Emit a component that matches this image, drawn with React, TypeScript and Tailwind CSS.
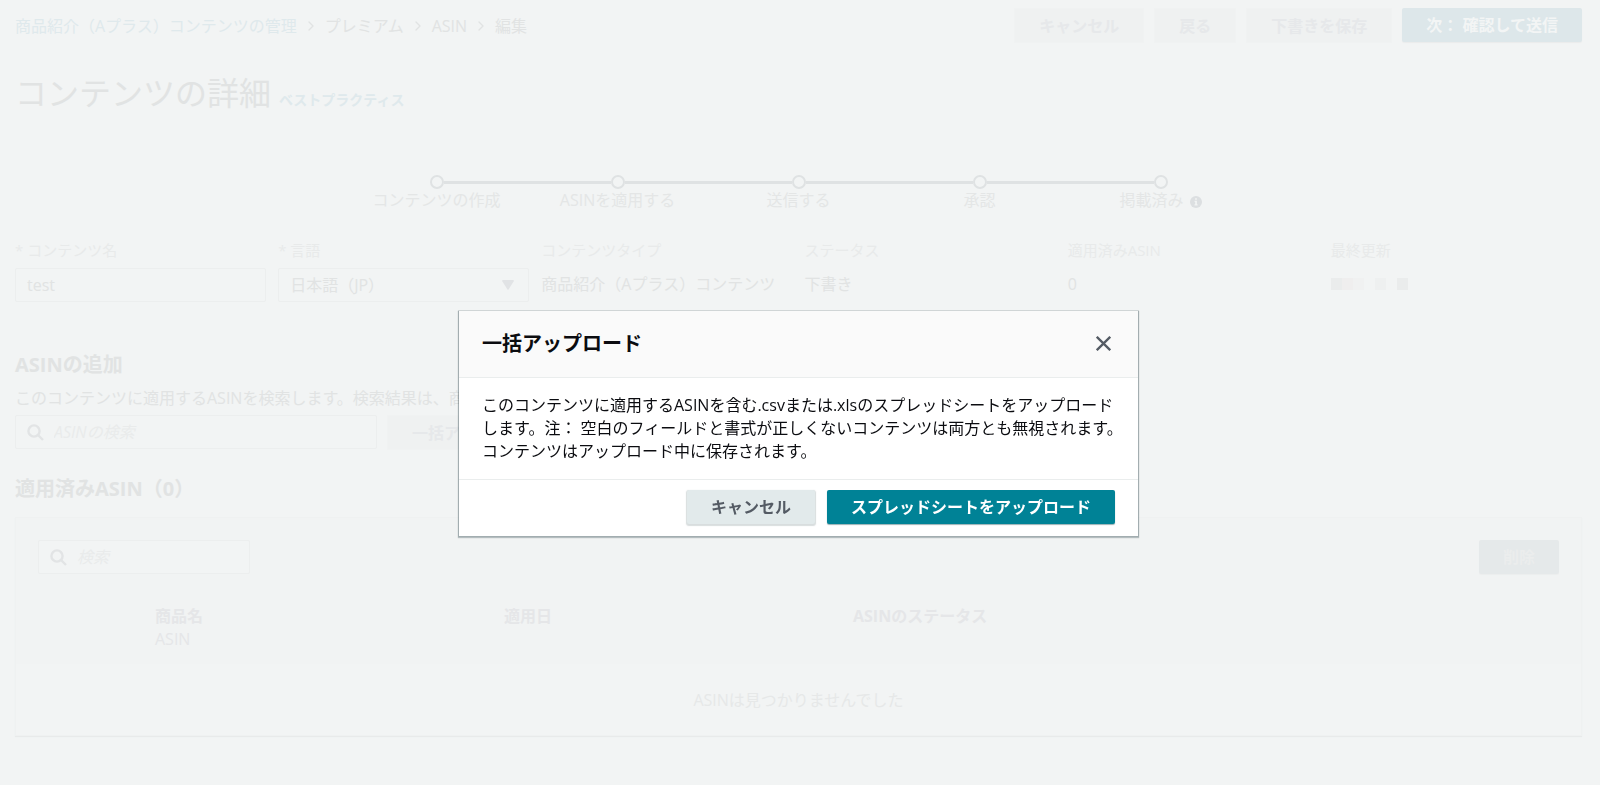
import React from 'react';
import { ChevronRight } from 'lucide-react';

const steps = ['コンテンツの作成', 'ASINを適用する', '送信する', '承認', '掲載済み'];

const redactedBlocks = ['bg-[#eaecec]', 'bg-[#efeeee]', 'bg-[#f0f1f1]', 'bg-transparent', 'bg-[#eef0f0]', 'bg-transparent', 'bg-[#eaecec]'];

function SearchIcon() {
  return (
    <svg width="17" height="17" viewBox="0 0 17 17" fill="none" stroke="#e2e4e5" strokeWidth="2.4" className="shrink-0">
      <circle cx="7" cy="7" r="5.6" />
      <path d="M11 11l5 5" />
    </svg>
  );
}

function InfoIcon() {
  return (
    <svg width="12" height="12" viewBox="0 0 12 12" className="mt-1">
      <circle cx="6" cy="6" r="6" fill="#dcdfe1" />
      <path d="M5.1 2.2h1.8v1.6H5.1zM4.6 4.8h2.3v3.5h.7v1.1H4.5V8.3h.7V5.9h-.6z" fill="#f2f4f4" />
    </svg>
  );
}

function GhostButton({ children }: { children: React.ReactNode }) {
  return (
    <button
      type="button"
      className="h-[35px] shrink-0 whitespace-nowrap rounded-xs border border-[#f0f2f2] bg-[#eff1f1] px-6 font-bold text-[#e6e8ea]"
    >
      {children}
    </button>
  );
}

function SearchBox({ id, label, placeholder, className }: { id: string; label: string; placeholder: string; className: string }) {
  return (
    <div className={`flex h-[34px] items-center gap-[10px] rounded-xs border border-[#eceeee] bg-[#f2f4f4] pl-[11px] ${className}`}>
      <SearchIcon />
      <input
        id={id}
        type="text"
        aria-label={label}
        placeholder={placeholder}
        className="min-w-0 flex-1 bg-transparent italic outline-none placeholder:text-[#e9ebeb]"
      />
    </div>
  );
}

function StaticField({ label, children }: { label: string; children: React.ReactNode }) {
  return (
    <div>
      <div className="text-[15px] leading-[22px] text-[#e8eaea]">{label}</div>
      <div className="mt-1.5 flex h-[34px] items-center whitespace-nowrap">{children}</div>
    </div>
  );
}

function UploadDialog() {
  return (
    <div className="fixed inset-0 z-10 flex items-center justify-center pt-[61px] pr-[18px] pl-[15px]">
      <div
        role="dialog"
        aria-modal="true"
        aria-labelledby="upload-title"
        className="w-full max-w-[679px] bg-white text-[#0b0c10] shadow-[0_0_0_1px_rgba(0,28,36,0.1),0_1px_1px_1px_rgba(0,28,36,0.25)]"
      >
        <div className="flex h-[67px] items-center justify-between border-b border-[#eaeded] bg-[#fafafa] px-[23px]">
          <h2 id="upload-title" className="text-xl leading-7 font-bold">一括アップロード</h2>
          <button type="button" aria-label="閉じる" className="p-1">
            <svg width="15" height="15" viewBox="0 0 15 15" fill="none" stroke="#545b64" strokeWidth="2.3">
              <path d="M.8 .8l13.4 13.4M14.2 .8L.8 14.2" />
            </svg>
          </button>
        </div>
        <p className="border-b border-[#eaeded] px-[23px] py-4 leading-[23px] whitespace-nowrap">
          このコンテンツに適用するASINを含む.csvまたは.xlsのスプレッドシートをアップロード
          <br />
          します。注： 空白のフィールドと書式が正しくないコンテンツは両方とも無視されます。
          <br />
          コンテンツはアップロード中に保存されます。
        </p>
        <div className="flex justify-end gap-3 px-[23px] pt-[10px] pb-3">
          <button
            type="button"
            className="h-[34px] rounded-xs bg-[#e2eaeb] px-6 font-bold text-[#545b64] shadow-[0_1px_1px_1px_rgba(100,120,125,0.25)]"
          >
            キャンセル
          </button>
          <button
            type="button"
            className="h-[34px] rounded-xs bg-[#008296] px-6 font-bold text-white shadow-[0_1px_1px_rgba(0,60,70,0.4)]"
          >
            スプレッドシートをアップロード
          </button>
        </div>
      </div>
    </div>
  );
}

export default function App() {
  return (
    <div lang="ja" className="min-h-screen bg-[#f2f4f4] font-['Open_Sans','Noto_Sans_CJK_JP',sans-serif] text-base leading-[22px] text-[#e1e3e3]">
      <main className="pt-2 pr-[18px] pb-12 pl-[15px]">
        <header className="flex items-center justify-between">
          <nav aria-label="breadcrumb" className="flex items-center gap-1.5 whitespace-nowrap">
            <a href="#manage" className="text-[#dfe9ec]">商品紹介（Aプラス）コンテンツの管理</a>
            <ChevronRight size={16} />
            <span>プレミアム</span>
            <ChevronRight size={16} />
            <span>ASIN</span>
            <ChevronRight size={16} />
            <span>編集</span>
          </nav>
          <div className="flex gap-[10px]">
            <GhostButton>キャンセル</GhostButton>
            <GhostButton>戻る</GhostButton>
            <GhostButton>下書きを保存</GhostButton>
            <button
              type="button"
              className="h-[34px] shrink-0 whitespace-nowrap rounded-xs bg-[#dde7ea] px-6 font-bold text-[#f3f5f5] shadow-[0_1px_1px_#eaecec]"
            >
              次： 確認して送信
            </button>
          </div>
        </header>

        <div className="mt-[30px] flex items-baseline gap-2">
          <h1 className="text-[32px] leading-10">コンテンツの詳細</h1>
          <a href="#best-practice" className="text-sm font-bold text-[#dfe9ec]">ベストプラクティス</a>
        </div>

        <ol className="mx-auto mt-[62px] grid max-w-[905px] grid-cols-5">
          {steps.map((step, i) => (
            <li key={step}>
              <div className="flex items-center">
                <div className={`h-[3px] flex-1 ${i > 0 ? 'bg-[#dfe2e3]' : ''}`} />
                <div className="size-[14px] rounded-full border-2 border-[#dfe2e3]" />
                <div className={`h-[3px] flex-1 ${i < steps.length - 1 ? 'bg-[#dfe2e3]' : ''}`} />
              </div>
              <div className="flex items-center justify-center gap-1.5 text-[#e4e6e6]">
                {step}
                {i === steps.length - 1 && <InfoIcon />}
              </div>
            </li>
          ))}
        </ol>

        <section className="mt-7 grid grid-cols-6 gap-3">
          <div>
            <label htmlFor="content-name" className="block text-[15px] leading-[22px] text-[#e8eaea]">* コンテンツ名</label>
            <input
              id="content-name"
              type="text"
              defaultValue="test"
              className="mt-[7px] block h-[34px] w-full rounded-xs border border-[#eceeee] px-[11px] outline-none"
            />
          </div>
          <div>
            <label htmlFor="language" className="block text-[15px] leading-[22px] text-[#e8eaea]">* 言語</label>
            <div className="relative mt-[7px]">
              <select id="language" className="block h-[34px] w-full appearance-none rounded-xs border border-[#eceeee] px-[11px] outline-none">
                <option>日本語（JP）</option>
              </select>
              <svg width="12" height="10" viewBox="0 0 12 10" className="pointer-events-none absolute top-3 right-[15px]">
                <path d="M1 0h10q1.300 0 .7 1.200L6.700 9.300q-.7 1-1.400 0L.3 1.200Q-.3 0 1 0z" fill="#e1e3e5" />
              </svg>
            </div>
          </div>
          <StaticField label="コンテンツタイプ">商品紹介（Aプラス）コンテンツ</StaticField>
          <StaticField label="ステータス">下書き</StaticField>
          <StaticField label="適用済みASIN">0</StaticField>
          <StaticField label="最終更新">
            {redactedBlocks.map((color, i) => (
              <span key={i} className={`h-3 w-[11px] ${color}`} />
            ))}
          </StaticField>
        </section>

        <section className="mt-[49px]">
          <h2 className="text-xl leading-7 font-bold">ASINの追加</h2>
          <p className="mt-2">このコンテンツに適用するASINを検索します。検索結果は、商品</p>
          <div className="mt-1.5 flex gap-[10px]">
            <SearchBox id="asin-search" label="ASINの検索" placeholder="ASINの検索" className="w-[362px]" />
            <GhostButton>一括アップロード</GhostButton>
          </div>
        </section>

        <section className="mt-[25px]">
          <h2 className="text-xl leading-7 font-bold">適用済みASIN（0）</h2>
          <div className="mt-[14px] border border-[#eff1f1] shadow-[0_1px_1px_#e8eaea]">
            <div className="flex items-center justify-between bg-[#f1f3f3] px-[22px] pt-[22px]">
              <SearchBox id="applied-search" label="検索" placeholder="検索" className="w-[212px]" />
              <button
                type="button"
                disabled
                className="h-[34px] rounded-xs bg-[#e5e9ea] px-6 font-bold text-[#ebeded] shadow-[0_1px_1px_#eceeee]"
              >
                削除
              </button>
            </div>
            <table className="w-full table-fixed text-left">
              <colgroup>
                <col className="w-[139px]" />
                <col className="w-[349px]" />
                <col className="w-[349px]" />
                <col />
              </colgroup>
              <thead className="bg-[#f1f3f3] leading-[23px] text-[#e5e6e8]">
                <tr className="align-top">
                  <td />
                  <th scope="col" className="pt-[31px] pb-[13px]">
                    商品名
                    <div className="font-normal">ASIN</div>
                  </th>
                  <th scope="col" className="pt-[31px]">適用日</th>
                  <th scope="col" className="pt-[31px]">ASINのステータス</th>
                </tr>
              </thead>
              <tbody>
                <tr>
                  <td colSpan={4} className="h-[71px] text-center text-[#e6e8e8]">ASINは見つかりませんでした</td>
                </tr>
              </tbody>
            </table>
          </div>
        </section>
      </main>
      <UploadDialog />
    </div>
  );
}
